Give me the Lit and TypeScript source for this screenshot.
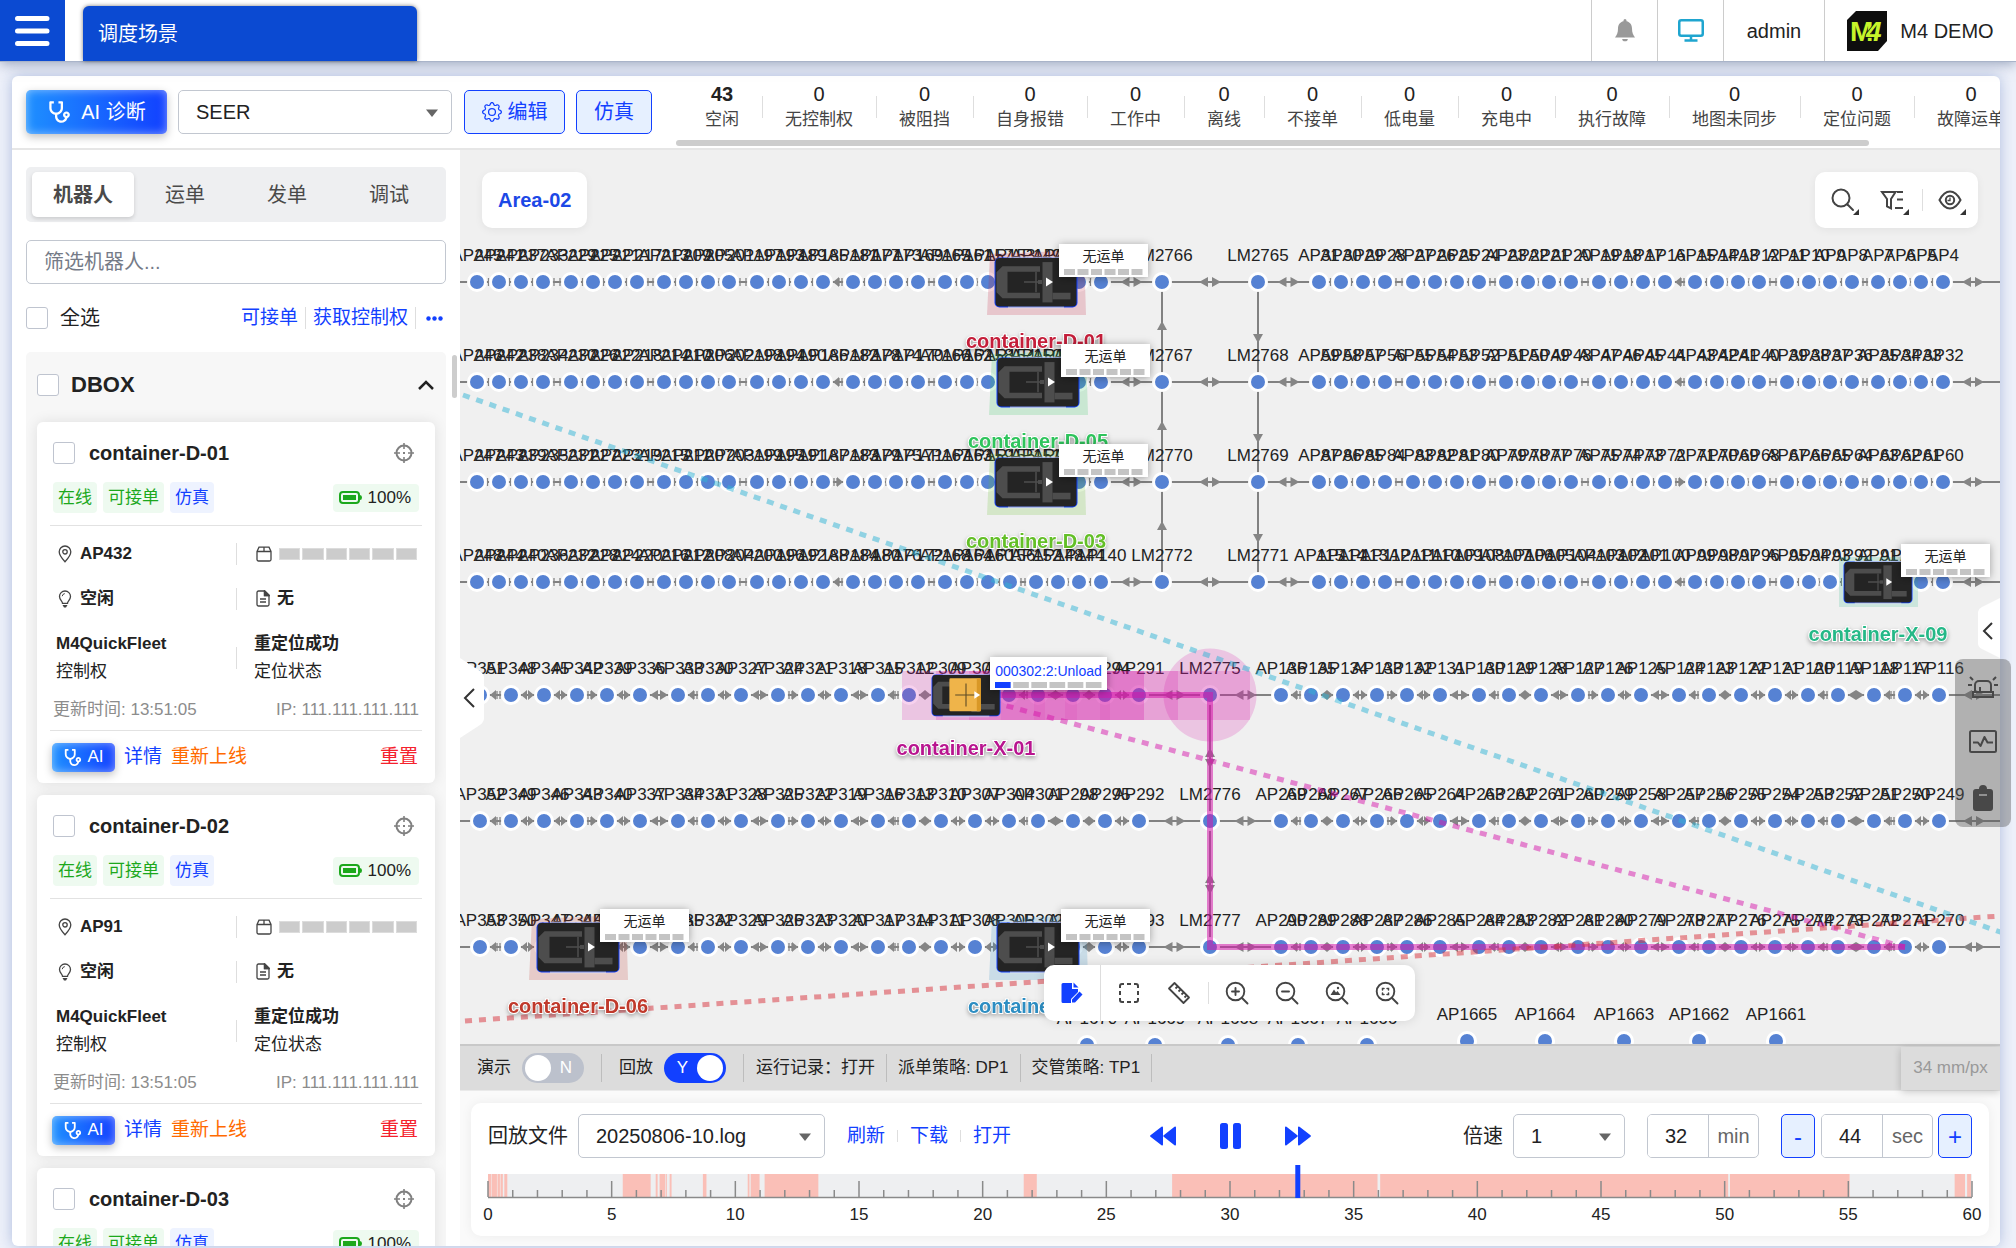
import { LitElement, html, svg, css, nothing } from "lit";
import { customElement, property } from "lit/decorators.js";

const STETHOSCOPE =
  "M8 3V5H6V9C6 11.2091 7.79086 13 10 13C12.2091 13 14 11.2091 14 9V5H12V3H15C15.5523 3 16 3.44772 16 4V9C16 11.973 13.8381 14.4405 11.0008 14.9169L11 16.5C11 18.433 12.567 20 14.5 20C15.9973 20 17.275 19.0598 17.7749 17.7375C16.7283 17.27 16 16.2201 16 15C16 13.3431 17.3431 12 19 12C20.6569 12 22 13.3431 22 15C22 16.3711 21.0802 17.5274 19.824 17.8854C19.2102 20.252 17.0592 22 14.5 22C11.4624 22 9 19.5376 9 16.5L9.00019 14.9171C6.16238 14.4411 4 11.9734 4 9V4C4 3.44772 4.44772 3 5 3H8ZM19 14C18.4477 14 18 14.4477 18 15C18 15.5523 18.4477 16 19 16C19.5523 16 20 15.5523 20 15C20 14.4477 19.5523 14 19 14Z";
const GEAR_RING =
  "M8 4.754a3.246 3.246 0 1 0 0 6.492 3.246 3.246 0 0 0 0-6.492zM5.754 8a2.246 2.246 0 1 1 4.492 0 2.246 2.246 0 0 1-4.492 0z";
const GEAR_BODY =
  "M9.796 1.343c-.527-1.79-3.065-1.79-3.592 0l-.094.319a.873.873 0 0 1-1.255.52l-.292-.16c-1.64-.892-3.433.902-2.54 2.541l.159.292a.873.873 0 0 1-.52 1.255l-.319.094c-1.79.527-1.79 3.065 0 3.592l.319.094a.873.873 0 0 1 .52 1.255l-.16.292c-.892 1.64.901 3.434 2.541 2.54l.292-.159a.873.873 0 0 1 1.255.52l.094.319c.527 1.79 3.065 1.79 3.592 0l.094-.319a.873.873 0 0 1 1.255-.52l.292.16c1.64.893 3.434-.902 2.54-2.541l-.159-.292a.873.873 0 0 1 .52-1.255l.319-.094c1.79-.527 1.79-3.065 0-3.592l-.319-.094a.873.873 0 0 1-.52-1.255l.16-.292c.893-1.64-.902-3.433-2.541-2.54l-.292.159a.873.873 0 0 1-1.255-.52l-.094-.319zm-2.633.283c.246-.835 1.428-.835 1.674 0l.094.319a1.873 1.873 0 0 0 2.693 1.115l.291-.16c.764-.415 1.6.42 1.184 1.185l-.159.292a1.873 1.873 0 0 0 1.116 2.692l.318.094c.835.246.835 1.428 0 1.674l-.319.094a1.873 1.873 0 0 0-1.115 2.693l.16.291c.415.764-.42 1.6-1.185 1.184l-.291-.159a1.873 1.873 0 0 0-2.693 1.116l-.094.318c-.246.835-1.428.835-1.674 0l-.094-.319a1.873 1.873 0 0 0-2.692-1.115l-.292.16c-.764.415-1.6-.42-1.184-1.185l.159-.291A1.873 1.873 0 0 0 1.945 8.93l-.319-.094c-.835-.246-.835-1.428 0-1.674l.319-.094A1.873 1.873 0 0 0 3.06 4.377l-.16-.292c-.415-.764.42-1.6 1.185-1.184l.292.159a1.873 1.873 0 0 0 2.692-1.115l.094-.319z";

const stethoscope = (size: number) =>
  html`<svg width=${size} height=${size} viewBox="2 2 21 21" fill="currentColor" aria-hidden="true"><path d=${STETHOSCOPE} /></svg>`;

const caret = html`<svg class="caret" width="12" height="8" viewBox="0 0 12 8" aria-hidden="true"><path d="M0 0.5h12L6 8z" fill="#666" /></svg>`;

const base = css`
  * { box-sizing: border-box; }
  button, input, select { font: inherit; color: inherit; margin: 0; }
  button { border: 0; background: none; padding: 0; cursor: pointer; }
  a { text-decoration: none; }
  svg { display: block; flex: none; }
  .check {
    appearance: none; width: 22px; height: 22px; flex: none;
    border: 1px solid #bfc4cf; border-radius: 3px; background: #fff;
  }
  .ai {
    display: flex; align-items: center; justify-content: center; color: #fff;
    background: linear-gradient(90deg, #1e90ff, #1240ff);
    box-shadow: inset 0 0 10px rgba(255, 255, 255, 0.5), 0 3px 8px rgba(0, 0, 0, 0.25);
    border-radius: 5px;
  }
  .vr { width: 1px; height: 22px; background: #dedede; flex: none; }
`;

/* ---------- robot card ---------- */

@customElement("robot-card")
export class RobotCard extends LitElement {
  @property() name = "";
  @property() point = "";

  static styles = [
    base,
    css`
      :host { display: block; background: #fff; border-radius: 6px; box-shadow: 0 0 14px rgba(0, 0, 0, 0.1); font-size: 17px; line-height: 28px; color: #222; padding: 0 13px; }
      .head { display: flex; align-items: center; gap: 14px; padding: 16px 8px 14px 3px; }
      .head label { flex: 1; font-size: 20px; line-height: 30px; font-weight: 700; }
      .tags { display: flex; gap: 6px; align-items: center; padding: 0 3px 12px; border-bottom: 1px solid #e2e2e2; }
      .tag { height: 31px; line-height: 32px; padding: 0 5px; border-radius: 4px; background: #eefaf0; color: #1ca81c; }
      .tag.sim { background: #eef3ff; color: #1240ff; }
      .battery { margin-left: auto; display: flex; align-items: center; gap: 6px; padding: 0 8px 0 6px; height: 28px; background: #eefaf0; border-radius: 4px; }
      .facts { padding-top: 5px; }
      .row { display: grid; grid-template-columns: 186px 1px 1fr; align-items: center; height: 45px; }
      .row.tall { height: 73px; }
      .cell { display: flex; align-items: center; gap: 8px; padding-left: 8px; }
      .cell.right { padding: 0 5px 0 19px; gap: 7px; }
      .stack { padding-left: 6px; }
      .stack.right { padding-left: 17px; }
      b { display: block; }
      .slots { flex: 1; display: grid; grid-template-columns: repeat(6, 1fr); gap: 2px; }
      .slots i { height: 12px; background: #ccc; border: 1px solid #dcdcdc; }
      .meta { display: flex; justify-content: space-between; padding: 2px 3px 6px; color: #8c8c8c; border-bottom: 1px solid #e2e2e2; }
      .foot { display: flex; align-items: center; gap: 9px; height: 52px; padding: 0 4px 0 2px; font-size: 19px; }
      .ai { width: 63px; height: 29px; gap: 5px; font-size: 17px; }
      .foot a { color: #1240ff; }
      .foot a.warn { color: #ff6a00; }
      .foot a.danger { color: #f5222d; margin-left: auto; }
    `,
  ];

  render() {
    return html`
      <div class="head">
        <input class="check" type="checkbox" id="pick" />
        <label for="pick">${this.name}</label>
        <svg width="20" height="20" viewBox="0 0 20 20" fill="none" stroke="#808080" stroke-width="2" aria-hidden="true">
          <circle cx="10" cy="10" r="7.5" />
          <path d="M10 0v6M10 14v6M0 10h6M14 10h6" stroke-width="1.6" />
          <path d="M9 10h2" />
        </svg>
      </div>
      <div class="tags">
        <span class="tag">在线</span><span class="tag">可接单</span><span class="tag sim">仿真</span>
        <span class="battery">
          <svg width="23" height="13" viewBox="0 0 23 13" aria-hidden="true">
            <rect x="1" y="1" width="19" height="11" rx="3" fill="none" stroke="#1ca81c" stroke-width="2" />
            <rect x="4" y="4" width="13" height="5" fill="#1ca81c" />
            <path d="M21 4q2 0 2 2.5T21 9z" fill="#1ca81c" />
          </svg>
          100%
        </span>
      </div>
      <div class="facts">
        <div class="row">
          <div class="cell">
            <svg width="14" height="18" viewBox="0 0 14 18" fill="none" stroke="#444" stroke-width="1.3" aria-hidden="true">
              <path d="M7 16.8C3 12.500 1.200 9.700 1.200 6.800a5.800 5.800 0 0 1 11.600 0C12.800 9.700 11 12.500 7 16.800z" />
              <circle cx="7" cy="6.800" r="2.200" />
            </svg>
            <b>${this.point}</b>
          </div>
          <span class="vr"></span>
          <div class="cell right">
            <svg width="16" height="16" viewBox="0 0 16 16" fill="none" stroke="#444" stroke-width="1.3" aria-hidden="true">
              <path d="M1 5.500 3 1.200h10l2 4.300v8a1.500 1.500 0 0 1-1.500 1.500h-11A1.500 1.500 0 0 1 1 13.500zM1 5.500h14M8 1.200v4.300" />
            </svg>
            <div class="slots">${Array.from({ length: 6 }, () => html`<i></i>`)}</div>
          </div>
        </div>
        <div class="row">
          <div class="cell">
            <svg width="14" height="18" viewBox="0 0 14 18" fill="none" stroke="#444" stroke-width="1.300" aria-hidden="true">
              <path d="M4.500 13.300C4.500 11 1.500 9.800 1.500 6.500a5.500 5.500 0 0 1 11 0c0 3.300-3 4.500-3 6.800z" />
              <path d="M4.500 15h5l-1.500 2.500h-2z" fill="#444" stroke="none" />
              <path d="M4.200 6.200A3 3 0 0 1 6.800 3.600" stroke-width="1" />
            </svg>
            <b>空闲</b>
          </div>
          <span class="vr"></span>
          <div class="cell right">
            <svg width="14" height="17" viewBox="0 0 14 17" fill="none" stroke="#444" stroke-width="1.300" aria-hidden="true">
              <path d="M2.500 1h6.300L13 5v9.500A1.500 1.500 0 0 1 11.500 16h-9A1.500 1.500 0 0 1 1 14.500v-12A1.500 1.500 0 0 1 2.500 1z" />
              <path d="M8.500 1v4.500H13M4 9h6M4 12h6" />
              <path d="M8.500 1v4.500H13z" fill="#444" />
            </svg>
            <b>无</b>
          </div>
        </div>
        <div class="row tall">
          <div class="stack"><b>M4QuickFleet</b>控制权</div>
          <span class="vr"></span>
          <div class="stack right"><b>重定位成功</b>定位状态</div>
        </div>
      </div>
      <div class="meta"><span>更新时间: 13:51:05</span><span>IP: 111.111.111.111</span></div>
      <div class="foot">
        <button class="ai">${stethoscope(19)}AI</button>
        <a href="#detail">详情</a><a class="warn" href="#online">重新上线</a><a class="danger" href="#reset">重置</a>
      </div>
    `;
  }
}

/* ---------- fleet map ---------- */

const LANE_LEFT = [477, 499, 521, 543, 571, 593, 615, 637, 664, 686, 708, 729, 757, 779, 801, 823, 853, 875, 896, 918, 945, 967, 988, 1010, 1036, 1058, 1079, 1101];
const LANE_RIGHT = [1319, 1341, 1363, 1385, 1413, 1435, 1457, 1479, 1506, 1528, 1549, 1571, 1599, 1621, 1643, 1665, 1695, 1717, 1738, 1759, 1787, 1809, 1830, 1852, 1878, 1900, 1921, 1943];
const WIDE_LEFT = [480, 511, 544, 577, 607, 640, 678, 708, 741, 778, 808, 841, 878, 909, 941, 975, 1009, 1038, 1073, 1105, 1139];
const WIDE_RIGHT = [1281, 1311, 1343, 1377, 1407, 1440, 1479, 1509, 1541, 1578, 1608, 1641, 1679, 1709, 1741, 1775, 1808, 1838, 1874, 1905, 1939];

interface Stop { x: number; label: string; }
interface Lane { y: number; stops: Stop[]; end: number; }

const series = (xs: number[], from: number, step: number): Stop[] =>
  xs.map((x, i) => ({ x, label: `AP${from - i * step}` }));

const LANES: Lane[] = [
  ...[
    [282, 245, 31, 2766, 2765],
    [382, 246, 59, 2767, 2768],
    [482, 247, 87, 2770, 2769],
    [582, 248, 115, 2772, 2771],
  ].map(([y, l, r, a, b]) => ({
    y,
    end: 2003,
    stops: [...series(LANE_LEFT, l, 4), { x: 1162, label: `LM${a}` }, { x: 1258, label: `LM${b}` }, ...series(LANE_RIGHT, r, 1)],
  })),
  ...[
    [695, 351, 136, 2775],
    [821, 352, 269, 2776],
    [947, 353, 290, 2777],
  ].map(([y, l, r, a]) => ({
    y,
    end: 2009,
    stops: [...series(WIDE_LEFT, l, 3), { x: 1210, label: `LM${a}` }, ...series(WIDE_RIGHT, r, 1)],
  })),
];

const LOOSE: { x: number; y: number; label: string }[] = [
  { x: 1087, y: 1045, label: "AP1670" }, { x: 1155, y: 1045, label: "AP1669" }, { x: 1228, y: 1045, label: "AP1668" },
  { x: 1298, y: 1045, label: "AP1667" }, { x: 1367, y: 1045, label: "AP1666" }, { x: 1467, y: 1041, label: "AP1665" },
  { x: 1545, y: 1041, label: "AP1664" }, { x: 1624, y: 1041, label: "AP1663" }, { x: 1699, y: 1041, label: "AP1662" },
  { x: 1776, y: 1041, label: "AP1661" },
];

const triLeft = (x: number, y: number, w = 9) => svg`<path class="tri" d="M${x} ${y}l${w} -5v10z" />`;
const triRight = (x: number, y: number, w = 9) => svg`<path class="tri" d="M${x} ${y}l${-w} -5v10z" />`;
const tick = (x: number, y: number) => svg`<path class="tick" d="M${x} ${y - 4}v8" />`;

function link(x1: number, x2: number, y: number, n: number) {
  const gap = x2 - x1;
  const mid = (x1 + x2) / 2;
  const a = x1 + 10;
  const b = x2 - 10;
  if (gap > 40) return svg`${triLeft(mid - 11, y)}${triRight(mid + 11, y)}`;
  if (gap > 34) return svg`${triLeft(a, y, 8)}${triRight(b, y, 8)}`;
  if (gap > 31) return svg`${triLeft(a, y, 6)}${triRight(b, y, 6)}`;
  if (gap > 28) return n % 2 ? svg`${tick(a + 1, y)}${tick(a + 4, y)}${triRight(b, y, 6)}` : svg`${triLeft(a, y, 6)}${tick(b - 4, y)}${tick(b - 1, y)}`;
  if (gap > 24) return svg`${tick(a + 1, y)}${tick(b - 1, y)}`;
  return tick(mid + (n % 2 ? 0.5 : -0.5), y);
}

const dot = (x: number, y: number) => svg`<circle class="dot" cx=${x} cy=${y} r="8.500" />`;

function robot(cx: number, cy: number, w: number, h: number, loaded = false) {
  return svg`
    <g transform="translate(${cx} ${cy}) scale(${w / 83} ${h / 48})">
      <rect x="-41.500" y="-24" width="83" height="49" rx="5" fill="#1240ff" />
      <path d="M-28 -25h56v51h-56z" fill="#e9e9ee" opacity="0.500" />
      <rect x="-40.500" y="-23.500" width="81" height="47.500" rx="4" fill="#242424" />
      <path d="M-33.500 -15.500H4v5.500h-32.500v20.500H4v5.500h-37.500l-6 -6v-19.500z" fill="#4d4d4d" />
      <path d="M-12 0H2M0 -10v20" stroke="#4d4d4d" stroke-width="1.500" />
      <path d="M2 -2h4v4h-4z" fill="#4d4d4d" />
      <rect x="6.500" y="-19.500" width="10" height="39.500" fill="#4d4d4d" />
      <rect x="16.500" y="10.500" width="18" height="6.500" fill="#4d4d4d" />
      ${loaded
        ? svg`<rect x="-20" y="-19.500" width="38" height="38.500" rx="1.500" fill="#efb44a" />
              <rect x="13" y="-19.500" width="5" height="38.500" fill="#d99827" />
              <path d="M-13 0h25M0 -13.500v27" stroke="#5b4a26" stroke-width="1.300" />`
        : nothing}
      <path d="M10 -4.500l7 4.500l-7 4.500z" fill="#fff" />
    </g>`;
}

function ticket(x: number, y: number, w: number, text: string, busy = false) {
  const pitch = (w - 8) / 6;
  return svg`
    <g filter="url(#soft)"><rect x=${x} y=${y} width=${w} height="33" fill="#fff" /></g>
    <text class=${busy ? "order busy" : "order"} x=${x + w / 2} y=${y + (busy ? 19 : 17)}>${text}</text>
    ${Array.from({ length: 6 }, (_, i) => svg`<rect x=${x + 5 + i * pitch} y=${y + 25} width=${pitch - 2.5} height="6" fill=${busy && i === 0 ? "#1240ff" : "#c4c4c4"} />`)}`;
}

interface Vehicle { x: number; y: number; color: string; name: string; tx: number; }
const BIG: Vehicle[] = [
  { x: 1036, y: 282, color: "#c41e3a", name: "container-D-01", tx: 1059 },
  { x: 1038, y: 382, color: "#2fc45c", name: "container-D-05", tx: 1061 },
  { x: 1036, y: 482, color: "#63bf27", name: "container-D-03", tx: 1059 },
  { x: 578, y: 947, color: "#c0392b", name: "container-D-06", tx: 600 },
  { x: 1038, y: 947, color: "#2c8dc2", name: "container-D-04", tx: 1061 },
];

@customElement("fleet-map")
export class FleetMap extends LitElement {
  static styles = [
    base,
    css`
      :host { display: block; position: relative; background: #f0f0f0; overflow: hidden; min-height: 0; }
      .canvas { position: absolute; inset: 0; width: 100%; height: 100%; }
      .line { stroke: #5c5c5c; stroke-width: 1.5; fill: none; }
      .tri { fill: #858585; }
      .tick { stroke: #858585; stroke-width: 1.3; }
      .dot { fill: #5682d3; stroke: #fff; stroke-width: 3; }
      .pt { font-size: 17px; fill: #222; text-anchor: middle; }
      .order { font-size: 14px; fill: #222; text-anchor: middle; }
      .order.busy { fill: #1240ff; }
      .name { font-size: 20px; font-weight: 700; text-anchor: middle; paint-order: stroke; stroke: #fff; stroke-width: 2px; filter: drop-shadow(0 2px 2px rgba(0, 0, 0, 0.3)); }
      .panel { position: absolute; background: #fff; border-radius: 10px; display: flex; align-items: center; height: 56px; box-shadow: 0 2px 8px rgba(0, 0, 0, 0.06); color: #444; }
      .area { left: 22px; top: 22px; padding: 0 16px; font-size: 20px; font-weight: 700; color: #1c48e6; }
      .tools { right: 22px; top: 22px; padding: 0 12px; gap: 18px; }
      .tools button { position: relative; width: 32px; height: 32px; }
      .tools button::after { content: ""; position: absolute; right: 0; bottom: 1px; border: 3px solid; border-color: transparent #333 #333 transparent; }
      .tools svg, .dock svg { margin: 0 auto; }
      .tools .vr { margin: 0 -7px 0 -5px; }
      .dock { left: 584px; bottom: 23px; box-shadow: 0 0 12px rgba(0, 0, 0, 0.12); overflow: hidden; padding-right: 3px; }
      .dock button { width: 50px; height: 56px; }
      .dock .first { width: 57px; border-right: 1px solid #ddd; }
      .dock .vr { margin: 0 3px 0 4px; }
      .dock .first + button { margin-left: 3px; }
      .handle { position: absolute; width: 24px; height: 80px; }
      .handle.l { left: 0; top: 508px; }
      .handle.r { right: -2px; top: 447px; height: 62px; }
    `,
  ];

  private drawLane(lane: Lane, li: number) {
    const { y, stops, end } = lane;
    return svg`
      <path class="line" d="M440 ${y}H2010" />
      ${stops.map((s, i) => (i < stops.length - 1 ? link(s.x, stops[i + 1].x, y, i + (li === 2 ? 0 : 1) + (li > 3 ? 1 : 0)) : link(s.x, end, y, i)))}
      ${stops.map((s) => dot(s.x, y))}`;
  }

  render() {
    return html`
      <svg class="canvas" role="img" aria-label="Area-02" font-family='"Liberation Sans", "Noto Sans CJK SC", sans-serif'>
        <defs>
          <filter id="soft" x="-20%" y="-40%" width="140%" height="190%"><feDropShadow dx="0" dy="1" stdDeviation="4" flood-opacity="0.35" /></filter>
        </defs>
        <g transform="translate(-460 -150)">
          <path class="line" d="M1162 282V582M1258 282V582M1210 695V947" />
          ${[326, 426, 526].map((y) => svg`<path class="tri" d="M1162 ${y - 5}l5 9h-10z" />`)}
          ${[338, 438, 538].map((y) => svg`<path class="tri" d="M1258 ${y + 5}l5 -9h-10z" />`)}
          ${[758, 884].map((y) => svg`<path class="tri" d="M1210 ${y - 10}l5 9h-10zM1210 ${y + 10}l5 -9h-10z" />`)}
          ${LANES.map((l, i) => this.drawLane(l, i))}
          ${LOOSE.map((p) => dot(p.x, p.y))}
          ${LANES.map((l) => l.stops.map((s) => svg`<text class="pt" x=${s.x} y=${l.y - 21}>${s.label}</text>`))}
          ${LOOSE.map((p) => svg`<text class="pt" x=${p.x} y=${p.y - 21}>${p.label}</text>`)}

          ${BIG.map((v) => svg`<path d="M${v.x - 46} ${v.y - 28}L${v.x + 48} ${v.y - 32}L${v.x + 50} ${v.y + 33}H${v.x - 49}z" fill=${v.color} fill-opacity="0.200" />`)}
          <rect x="1839" y="557" width="79" height="50" fill="#25b887" fill-opacity="0.180" />

          <g fill="#d618ab" fill-opacity="0.200">
            <rect x="902" y="671" width="276" height="49" />
            <rect x="936" y="671" width="208" height="49" />
            <rect x="969" y="671" width="175" height="49" />
            <rect x="1144" y="671" width="106" height="49" />
            <circle cx="1210" cy="695" r="46.500" />
          </g>
          <g fill="#d618ab" fill-opacity="0.100">
            <rect x="1001" y="671" width="143" height="49" />
            <rect x="1034" y="671" width="11" height="49" />
            <rect x="1065" y="671" width="12" height="49" />
            <rect x="1100" y="671" width="10" height="49" />
          </g>
          <path d="M966 695H1210V947H1905" fill="none" stroke="#d618ab" stroke-opacity="0.550" stroke-width="6" />
          <g fill="none" stroke-width="5" stroke-dasharray="7 7" stroke-opacity="0.500">
            <path d="M463 395L2003 933" stroke="#30b4d6" />
            <path d="M966 695L1905 947" stroke="#d618ab" />
            <path d="M465 1021L2000 916" stroke="#d8303a" />
          </g>

          ${BIG.map((v) => svg`${robot(v.x, v.y, 83, 49)}`)}
          ${robot(1878, 582, 69, 41)}
          ${robot(966, 695, 69, 41, true)}

          ${BIG.map((v) => svg`<text class="name" fill=${v.color} x=${v.x} y=${v.y + 66}>${v.name}</text>${ticket(v.tx, v.y - 38, 89, "无运单")}`)}
          <text class="name" fill="#25b887" x="1878" y="641">container-X-09</text>
          ${ticket(1901, 544, 89, "无运单")}
          <text class="name" fill="#b8158f" x="966" y="755">container-X-01</text>
          ${ticket(990, 657, 117, "000302:2:Unload", true)}
        </g>
      </svg>

      <button class="panel area">Area-02</button>

      <div class="panel tools">
        <button aria-label="搜索">
          <svg width="26" height="26" viewBox="0 0 26 26" fill="none" stroke="currentColor" stroke-width="2" stroke-linecap="round"><circle cx="11" cy="11" r="8.500" /><path d="M17.500 17.500L23 23" /></svg>
        </button>
        <button aria-label="筛选">
          <svg width="26" height="26" viewBox="0 0 26 26" fill="none" stroke="currentColor" stroke-width="2"><path d="M2 5h13.500L11 12v9.500l-4-2V12zM17 5h6M17 12.500h6M15 21h8" /></svg>
        </button>
        <span class="vr"></span>
        <button aria-label="显示">
          <svg width="26" height="26" viewBox="0 0 26 26" fill="none" stroke="currentColor" stroke-width="2"><path d="M2.500 13Q7 4.500 13 4.500T23.500 13Q19 21.500 13 21.500T2.500 13z" /><circle cx="13" cy="13" r="4.200" /><path d="M13 10.500v3h-2.500" stroke-width="1.300" /></svg>
        </button>
      </div>

      <div class="panel dock">
        <button class="first" aria-label="编辑地图">
          <svg width="24" height="24" viewBox="0 0 24 24" fill="#1240ff"><path d="M3 2h9v6h6v3l-7 7v4H3a1.500 1.500 0 0 1-1.500-1.500v-17A1.500 1.500 0 0 1 3 2z" /><path d="M13.500 1.500l5 5h-5z" /><path d="M19.500 10.500l3 3-7.500 8h-3v-3z" /></svg>
        </button>
        <button aria-label="框选">
          <svg width="24" height="24" viewBox="0 0 24 24" fill="none" stroke="currentColor" stroke-width="2"><path d="M3 7V5a2 2 0 0 1 2-2h2M10 3h4M17 3h2a2 2 0 0 1 2 2v2M21 10v4M21 17v2a2 2 0 0 1-2 2h-2M14 21h-4M7 21H5a2 2 0 0 1-2-2v-2M3 14v-4" /></svg>
        </button>
        <button aria-label="测量">
          <svg width="24" height="24" viewBox="0 0 24 24" fill="none" stroke="currentColor" stroke-width="1.800" stroke-linejoin="round"><path d="M7.500 2L22 16.500 16.500 22 2 7.500zM8.500 7.500l2-2M11.500 10.500l2-2M14.500 13.500l2-2M17.500 16.500l1.500-1.500" /></svg>
        </button>
        <span class="vr"></span>
        ${[
          svg`<path d="M10.500 7v7M7 10.500h7" />`,
          svg`<path d="M7 10.500h7" />`,
          svg`<path d="M5.500 14l3.500-5.500 2 3 1.500-1.500 3 4z" fill="currentColor" stroke="none" /><circle cx="13" cy="7" r="1.200" fill="currentColor" stroke="none" />`,
          svg`<path d="M7.500 9V7.500H9M12 7.500h1.500V9M13.500 12v1.500H12M9 13.500H7.500V12" stroke-width="1.500" />`,
        ].map(
          (glyph, i) => html`<button aria-label=${["放大", "缩小", "适应地图", "适应选区"][i]}>
            <svg width="24" height="24" viewBox="0 0 24 24" fill="none" stroke="currentColor" stroke-width="1.900" stroke-linecap="round"><circle cx="10.500" cy="10.500" r="8.800" /><path d="M17 17l5.500 5.500" />${glyph}</svg>
          </button>`
        )}
      </div>

      <button class="handle l" aria-label="收起左侧">
        <svg width="24" height="80" viewBox="0 0 24 80" fill="none"><path d="M0 0L20 13Q24 16 24 20V60Q24 64 20 67L0 80z" fill="#fff" /><path d="M14 31L5 40l9 9" stroke="#333" stroke-width="2" /></svg>
      </button>
      <button class="handle r" aria-label="展开右侧">
        <svg width="24" height="62" viewBox="0 0 24 62" fill="none"><path d="M24 0L4 10Q0 12 0 16V46Q0 50 4 52L24 62z" fill="#fff" /><path d="M14 26L6 34l8 8" stroke="#333" stroke-width="2" /></svg>
      </button>
    `;
  }
}

/* ---------- replay timeline ---------- */

const SPANS: [number, number][] = [
  [0, 1], [1.1, 1.3], [9.08, 10.96], [11.3, 11.43], [11.56, 11.93], [11.97, 12.05], [12.24, 12.37],
  [14.48, 14.72], [17.5, 17.62], [17.7, 18.3], [18.64, 22.26], [36.1, 36.98], [46.1, 59.94],
  [60.12, 83.57], [83.69, 91.75], [98.83, 99.53], [99.67, 99.93],
];

@customElement("replay-timeline")
export class ReplayTimeline extends LitElement {
  static styles = css`
    :host { display: block; }
    svg { display: block; width: 100%; height: 60px; overflow: visible; }
    .major { stroke: #8a8a8a; stroke-width: 1.5; }
    .num { font-size: 17px; fill: #222; text-anchor: middle; }
  `;
  render() {
    return html`<svg role="img" aria-label="0 - 60" font-family='"Liberation Sans", sans-serif'>
      <rect x="0" y="9" width="100%" height="23" fill="#eeeff1" />
      ${SPANS.map(([a, b]) => svg`<rect x="${a}%" y="9" width="${b - a}%" height="23" fill="#fabfb7" />`)}
      ${[0.2, 0.6, 0.8].map((a) => svg`<rect x="${a}%" y="9" width="1" height="23" fill="#f5dcd9" />`)}
      <line class="major" x1="0" x2="100%" y1="32.500" y2="32.500" />
      ${Array.from({ length: 61 }, (_, i) => {
        const x = `${(i / 60) * 100}%`;
        return svg`<line class="major" x1=${x} x2=${x} y1=${i % 5 ? 25 : 16} y2="32" />
          ${i % 5 ? nothing : svg`<text class="num" x=${x} y="55">${i}</text>`}`;
      })}
      <rect x="54.400%" y="0" width="5" height="33" fill="#1240ff" />
    </svg>`;
  }
}

/* ---------- application shell ---------- */

const STATS: [number, string][] = [
  [43, "空闲"], [0, "无控制权"], [0, "被阻挡"], [0, "自身报错"], [0, "工作中"], [0, "离线"], [0, "不接单"],
  [0, "低电量"], [0, "充电中"], [0, "执行故障"], [0, "地图未同步"], [0, "定位问题"], [0, "故障运单"],
];

@customElement("app-root")
export class AppRoot extends LitElement {
  static styles = [
    base,
    css`
      :host { display: flex; flex-direction: column; height: 100vh; overflow: hidden; background: #eef1fa; color: #222; font-family: "Liberation Sans", "Noto Sans CJK SC", sans-serif; font-size: 20px; line-height: 28px; position: relative; }
      header { display: flex; height: 62px; background: #fff; border-bottom: 1px solid #a9b4c9; box-shadow: 0 2px 12px rgba(70, 90, 130, 0.5); flex: none; position: relative; z-index: 1; }
      .menu { width: 65px; background: #0b4ad2; display: grid; place-items: center; }
      .page-tab { margin: 6px 0 0 18px; width: 334px; padding-left: 15px; text-align: left; color: #fff; background: #0b4ad2; border-radius: 6px 6px 0 0; box-shadow: 0 0 4px rgba(0, 0, 0, 0.5); }
      .top-right { margin-left: auto; display: flex; }
      .top-right > * { border-left: 1px solid #ccc; display: flex; align-items: center; justify-content: center; }
      .icon-cell { width: 66px; }
      .user { width: 101px; }
      .brand { width: 192px; gap: 13px; }

      main { flex: 1; min-height: 0; margin: 14px 16px 2px 12px; background: #fff; border-radius: 6px; box-shadow: 0 0 14px rgba(120, 145, 200, 0.55); display: flex; flex-direction: column; overflow: hidden; }
      .bar { height: 74px; flex: none; display: flex; align-items: flex-start; padding: 14px 0 0 14px; border-bottom: 2px solid #e6e6e6; }
      .bar .ai { width: 141px; height: 44px; gap: 10px; }
      .select { position: relative; display: block; }
      .select select, .field { appearance: none; height: 44px; border: 1px solid #c2c7d0; border-radius: 5px; background: #fff; padding: 0 17px; width: 100%; display: block; }
      .caret { position: absolute; right: 14px; top: 19px; pointer-events: none; }
      .scene { width: 274px; margin: 0 12px 0 11px; }
      .soft-btn { height: 44px; border: 1px solid #1240ff; border-radius: 5px; background: #e6f0ff; color: #1240ff; display: flex; align-items: center; justify-content: center; gap: 6px; }
      .edit { width: 101px; margin-right: 11px; }
      .sim { width: 76px; margin-right: 24px; }
      .stats { flex: 1; min-width: 0; overflow: hidden; position: relative; align-self: stretch; margin-top: -14px; }
      .stats ul { list-style: none; margin: 0; padding: 5px 0 0 7px; display: flex; align-items: center; }
      .stats li { padding: 0 23px 0 22px; text-align: center; white-space: nowrap; line-height: 26px; flex: none; }
      .stats li small { display: block; font-size: 17px; color: #444; }
      .stats li:first-child strong { font-weight: 700; }
      .stats strong { font-weight: 400; }
      .thumb { position: absolute; background: #cdcdcd; border-radius: 3px; }
      .stats .thumb { left: 0; right: 131px; bottom: 2px; height: 6px; }

      .body { flex: 1; min-height: 0; display: grid; grid-template-columns: 448px minmax(0, 1fr); grid-template-rows: minmax(0, 1fr); }
      aside { position: relative; padding: 17px 14px 0; display: flex; flex-direction: column; min-height: 0; overflow: hidden; }
      .tabs { display: grid; grid-template-columns: repeat(4, 1fr); height: 55px; padding: 5px 6px; background: #eeeff1; border-radius: 5px; flex: none; }
      .tabs button { color: #4a4a4a; border-radius: 5px; }
      .tabs button[aria-selected="true"] { background: #fff; font-weight: 700; box-shadow: 0 2px 4px rgba(0, 0, 0, 0.15); }
      .filter { margin-top: 18px; flex: none; }
      .filter::placeholder { color: #757b87; opacity: 1; }
      .all { display: flex; align-items: center; margin: 20px 0; flex: none; }
      .all label { margin: 0 auto 0 12px; }
      .all a, .links a { color: #1240ff; font-size: 19px; }
      .all .vr { margin: 0 7px; }
      .all svg { margin: 0 3px; }
      .group { flex: 1; min-height: 0; background: #f7f7f7; border-radius: 5px 5px 0 0; overflow: hidden; }
      .group-head { height: 70px; display: flex; align-items: center; gap: 12px; padding: 0 12px 5px 11px; font-size: 22px; font-weight: 700; }
      .group-head label { flex: 1; }
      .cards { display: grid; gap: 12px; padding: 0 11px; }
      aside > .thumb { right: 3px; top: 205px; width: 5px; height: 43px; }

      .stage { display: grid; grid-template-rows: minmax(0, 1fr) 46px 156px; min-height: 0; min-width: 0; }
      .status { display: flex; align-items: center; background: #dcdcdc; border-top: 2px solid #c8c8c8; padding-left: 17px; font-size: 17px; position: relative; }
      .status .sep { width: 1px; height: 28px; background: #bdbdbd; margin: 0 11px; }
      .status .wide { margin: 0 17px; }
      .status .after { margin: 0 12px 0 17px; }
      .scale { margin-left: auto; width: 99px; height: 43px; display: grid; place-items: center; color: #999; box-shadow: 0 2px 8px rgba(0, 0, 0, 0.2); }
      .switch { position: relative; display: flex; align-items: center; gap: 11px; }
      .switch input { appearance: none; width: 62px; height: 30px; border-radius: 15px; background: #bcc1cc; display: flex; align-items: center; padding: 2px 3px; }
      .switch input::before { content: ""; width: 26px; height: 26px; border-radius: 50%; background: #fff; }
      .switch input:checked { background: #1240ff; justify-content: flex-end; }
      .switch em { position: absolute; right: 12px; font-style: normal; color: #fff; }
      .switch em.on { right: 38px; }

      .replay { background: #fafafa; padding: 12px 11px 11px; border-top: 1px solid #eaeaea; }
      .replay-card { height: 133px; background: #fff; border-radius: 10px; box-shadow: 0 0 12px rgba(0, 0, 0, 0.06); padding: 11px 17px 0; display: flex; flex-direction: column; gap: 7px; }
      .controls { display: grid; grid-template-columns: 1fr auto 1fr; align-items: center; }
      .cluster { display: flex; align-items: center; }
      .cluster.end { justify-content: flex-end; }
      .file { width: 247px; margin: 0 22px 0 10px; }
      .links { display: flex; align-items: center; gap: 12px; }
      .links .vr { height: 12px; }
      .play { display: flex; gap: 40px; }
      .speed { width: 112px; margin: 0 22px 0 10px; }
      .unit { display: flex; width: 112px; height: 44px; border: 1px solid #c2c7d0; border-radius: 5px; overflow: hidden; color: #666; align-items: center; }
      .unit input { width: 61px; height: 42px; border: 0; border-right: 1px solid #c2c7d0; text-align: center; background: #fff; color: #222; padding: 0 4px 0 0; }
      .unit span { flex: 1; text-align: center; }
      .step { width: 34px; font-size: 24px; padding-top: 2px; }
      .step.minus { margin: 0 6px 0 22px; }
      .step.plus { margin-left: 5px; }

      .alarms { position: absolute; right: 5px; top: 659px; width: 56px; height: 168px; border-radius: 8px; background: rgba(90, 90, 90, 0.42); display: flex; flex-direction: column; justify-content: space-around; align-items: center; color: #484848; z-index: 2; }
    `,
  ];

  render() {
    return html`
      <header>
        <button class="menu" aria-label="菜单">
          <svg width="35" height="30" viewBox="0 0 35 30" stroke="#fff" stroke-width="5" stroke-linecap="round"><path d="M2.500 2.500h29.500M2.500 15h29.500M2.500 27.500h29.500" /></svg>
        </button>
        <button class="page-tab">调度场景</button>
        <div class="top-right">
          <button class="icon-cell" aria-label="通知">
            <svg width="20" height="24" viewBox="0 0 20 24" fill="#999"><path d="M10 0a1.500 1.500 0 0 1 1.500 1.500v.8C15 3 17 6 17 9.500c0 4 1 6.500 3 9H0c2-2.500 3-5 3-9C3 6 5 3 8.500 2.300v-.8A1.500 1.500 0 0 1 10 0zM7.200 20h5.600a2.800 2.300 0 0 1-5.600 0z" /></svg>
          </button>
          <button class="icon-cell" aria-label="屏幕">
            <svg width="26" height="23" viewBox="0 0 26 23" fill="none" stroke="#1fa5cf" stroke-width="2.500"><rect x="1.250" y="1.250" width="23.500" height="15.500" rx="2" /><path d="M13 17v4M6.500 21.500h13" /></svg>
          </button>
          <span class="user">admin</span>
          <span class="brand">
            <svg width="40" height="40" viewBox="0 0 40 40" aria-hidden="true">
              <path d="M9 0H40V30L31 40H0V9z" fill="#0e0e0e" />
              <g fill="#c6f42a" font-family='"Liberation Sans", sans-serif' font-weight="700" font-size="28">
                <text x="3" y="30">M</text><text x="19" y="30" font-style="italic" stroke="#0e0e0e" stroke-width="1.500" paint-order="stroke">4</text>
              </g>
            </svg>
            M4 DEMO
          </span>
        </div>
      </header>

      <main>
        <div class="bar">
          <button class="ai">${stethoscope(24)}AI 诊断</button>
          <label class="select scene"><select aria-label="场景"><option>SEER</option></select>${caret}</label>
          <button class="soft-btn edit">
            <svg width="20" height="20" viewBox="0 0 16 16" fill="currentColor" aria-hidden="true"><path d=${GEAR_RING} /><path d=${GEAR_BODY} /></svg>编辑
          </button>
          <button class="soft-btn sim">仿真</button>
          <div class="stats">
            <ul>
              ${STATS.map(([n, label], i) => html`${i ? html`<span class="vr"></span>` : nothing}<li><strong>${n}</strong><small>${label}</small></li>`)}
            </ul>
            <span class="thumb"></span>
          </div>
        </div>

        <div class="body">
          <aside>
            <div class="tabs" role="tablist">
              ${["机器人", "运单", "发单", "调试"].map((t, i) => html`<button role="tab" aria-selected=${i === 0 ? "true" : "false"}>${t}</button>`)}
            </div>
            <input class="field filter" type="text" placeholder="筛选机器人..." aria-label="筛选机器人" />
            <div class="all">
              <input class="check" type="checkbox" id="all" /><label for="all">全选</label>
              <a href="#accept">可接单</a><span class="vr"></span><a href="#control">获取控制权</a><span class="vr"></span>
              <svg width="17" height="5" viewBox="0 0 17 5" fill="#1240ff" aria-hidden="true"><circle cx="2.500" cy="2.500" r="2.200" /><circle cx="8.500" cy="2.500" r="2.200" /><circle cx="14.500" cy="2.500" r="2.200" /></svg>
            </div>
            <section class="group">
              <div class="group-head">
                <input class="check" type="checkbox" id="dbox" /><label for="dbox">DBOX</label>
                <svg width="16" height="10" viewBox="0 0 16 10" fill="none" stroke="#222" stroke-width="2.500" aria-hidden="true"><path d="M1 9l7-7 7 7" /></svg>
              </div>
              <div class="cards">
                <robot-card name="container-D-01" point="AP432"></robot-card>
                <robot-card name="container-D-02" point="AP91"></robot-card>
                <robot-card name="container-D-03" point="AP210"></robot-card>
              </div>
            </section>
            <span class="thumb"></span>
          </aside>

          <section class="stage">
            <fleet-map></fleet-map>
            <div class="status">
              <label class="switch">演示<input type="checkbox" role="switch" /><em>N</em></label>
              <span class="sep wide"></span>
              <label class="switch">回放<input type="checkbox" role="switch" checked /><em class="on">Y</em></label>
              <span class="sep after"></span>运行记录：打开<span class="sep"></span>派单策略: DP1<span class="sep"></span>交管策略: TP1<span class="sep"></span>
              <span class="scale">34 mm/px</span>
            </div>
            <div class="replay">
              <div class="replay-card">
                <div class="controls">
                  <div class="cluster">
                    <label for="file">回放文件</label>
                    <span class="select file"><select id="file"><option>20250806-10.log</option></select>${caret}</span>
                    <span class="links"><a href="#refresh">刷新</a><span class="vr"></span><a href="#download">下载</a><span class="vr"></span><a href="#open">打开</a></span>
                  </div>
                  <div class="play">
                    <button aria-label="后退"><svg width="27" height="26" viewBox="0 0 27 26" fill="#1240ff"><path d="M13 4.500v17a1 1 0 0 1-1.500.8L.8 14a1.200 1.200 0 0 1 0-2L11.500 3.700a1 1 0 0 1 1.500.8zM26 4.500v17a1 1 0 0 1-1.500.8L14 14a1.200 1.200 0 0 1 0-2L24.500 3.700a1 1 0 0 1 1.500.8z" /></svg></button>
                    <button aria-label="暂停"><svg width="27" height="26" viewBox="0 0 27 26" fill="#1240ff"><rect x="3" y="0" width="8" height="26" rx="2.500" /><rect x="16" y="0" width="8" height="26" rx="2.500" /></svg></button>
                    <button aria-label="前进"><svg width="27" height="26" viewBox="0 0 27 26" fill="#1240ff"><path d="M1 4.500v17a1 1 0 0 0 1.500.8L13 14a1.200 1.200 0 0 0 0-2L2.500 3.700a1 1 0 0 0-1.500.8zM14 4.500v17a1 1 0 0 0 1.500.8L26.200 14a1.200 1.200 0 0 0 0-2L15.500 3.700a1 1 0 0 0-1.500.8z" /></svg></button>
                  </div>
                  <div class="cluster end">
                    <label for="speed">倍速</label>
                    <span class="select speed"><select id="speed"><option>1</option></select>${caret}</span>
                    <label class="unit"><input type="text" value="32" /><span>min</span></label>
                    <button class="soft-btn step minus">-</button>
                    <label class="unit"><input type="text" value="44" /><span>sec</span></label>
                    <button class="soft-btn step plus">+</button>
                  </div>
                </div>
                <replay-timeline></replay-timeline>
              </div>
            </div>
          </section>
        </div>
      </main>

      <div class="alarms">
        <svg width="30" height="24" viewBox="0 0 30 24" fill="none" stroke="currentColor" stroke-width="2" aria-hidden="true"><path d="M7 16V10a4 4 0 0 1 4-4h8a4 4 0 0 1 4 4v6M12 16v-4M5 17h20v5H5zM0 10h4M26 10h4M2 2l3 3M28 2l-3 3" /></svg>
        <svg width="28" height="23" viewBox="0 0 28 23" fill="none" stroke="currentColor" stroke-width="2" stroke-linejoin="round" aria-hidden="true"><rect x="1" y="1" width="26" height="21" rx="1.500" /><path d="M4 12.500h5l2.500 3.500 4-9 3 5.500h5.500" /></svg>
        <svg width="20" height="26" viewBox="0 0 20 26" aria-hidden="true"><path d="M3 4h3a4 4 0 0 1 8 0h3a3 3 0 0 1 3 3v16a3 3 0 0 1-3 3H3a3 3 0 0 1-3-3V7a3 3 0 0 1 3-3z" fill="currentColor" /><path d="M6 10h8" stroke="#aaa" stroke-width="1.500" /></svg>
      </div>
    `;
  }
}
